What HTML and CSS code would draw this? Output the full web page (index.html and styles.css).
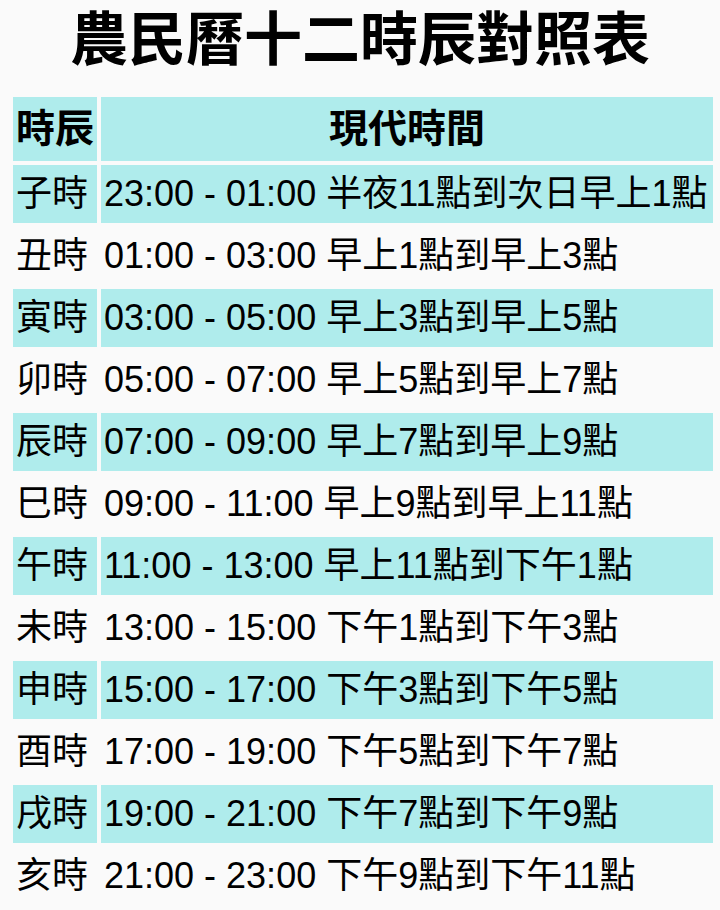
FILE: index.html
```html
<!DOCTYPE html>
<html lang="zh-Hant">
<head>
<meta charset="utf-8">
<title>農民曆十二時辰對照表</title>
<link rel="stylesheet" href="styles.css">
</head>
<body>
<h1 class="title">農民曆十二時辰對照表</h1>
<table class="chart">
  <thead>
    <tr><th class="col-name">時辰</th><th class="col-time">現代時間</th></tr>
  </thead>
  <tbody>
    <tr class="hl"><td>子時</td><td>23:00 - 01:00 半夜11點到次日早上1點</td></tr>
    <tr><td>丑時</td><td>01:00 - 03:00 早上1點到早上3點</td></tr>
    <tr class="hl"><td>寅時</td><td>03:00 - 05:00 早上3點到早上5點</td></tr>
    <tr><td>卯時</td><td>05:00 - 07:00 早上5點到早上7點</td></tr>
    <tr class="hl"><td>辰時</td><td>07:00 - 09:00 早上7點到早上9點</td></tr>
    <tr><td>巳時</td><td>09:00 - 11:00 早上9點到早上11點</td></tr>
    <tr class="hl"><td>午時</td><td>11:00 - 13:00 早上11點到下午1點</td></tr>
    <tr><td>未時</td><td>13:00 - 15:00 下午1點到下午3點</td></tr>
    <tr class="hl"><td>申時</td><td>15:00 - 17:00 下午3點到下午5點</td></tr>
    <tr><td>酉時</td><td>17:00 - 19:00 下午5點到下午7點</td></tr>
    <tr class="hl"><td>戌時</td><td>19:00 - 21:00 下午7點到下午9點</td></tr>
    <tr><td>亥時</td><td>21:00 - 23:00 下午9點到下午11點</td></tr>
  </tbody>
</table>
</body>
</html>
```
FILE: styles.css
```css
html, body {
  margin: 0;
  padding: 0;
  background: #fafafa;
}
body {
  font-family: "Liberation Sans", "Noto Sans CJK TC", sans-serif;
  color: #000;
  width: 720px;
  height: 910px;
  overflow: hidden;
}
.title {
  margin: 0;
  height: 93px;
  font-size: 58px;
  line-height: 80px;
  font-weight: bold;
  text-align: center;
}
.chart {
  margin-left: 9px;
  width: 708px;
  border-collapse: separate;
  border-spacing: 4px;
  table-layout: fixed;
  font-size: 36px;
}
.chart th, .chart td {
  padding: 0 0 0 3px;
  white-space: nowrap;
  vertical-align: middle;
  text-align: left;
}
.chart th {
  height: 64px;
  background: #afecec;
  font-weight: bold;
  font-size: 39px;
  line-height: 64px;
  overflow: visible;
}
.chart th.col-time {
  text-align: center;
  padding: 0;
}
.col-name { width: 81px; }
.chart td {
  height: 58px;
  line-height: 58px;
}
.chart tr.hl td {
  background: #afecec;
}
```
